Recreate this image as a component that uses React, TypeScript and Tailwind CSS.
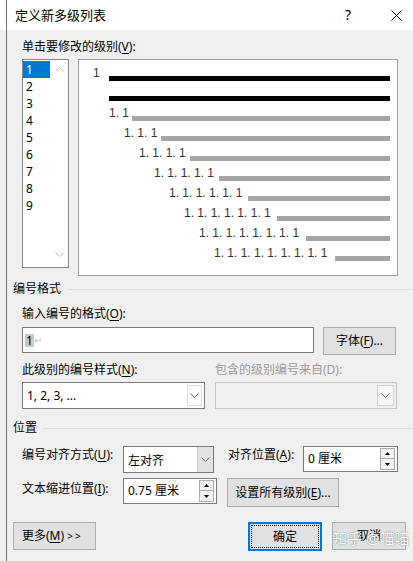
import React from "react";

const levels = ["1", "2", "3", "4", "5", "6", "7", "8", "9"];

// sub-level preview rows: 1. 1 ... 1. 1. 1. 1. 1. 1. 1. 1. 1
const subRows = [1, 2, 3, 4, 5, 6, 7, 8].map((k) => ({
  label: Array.from({ length: k + 1 }, () => "1").join(". "),
  indent: 30 + 15 * (k - 1),
  width: 23 + 14 * (k - 1),
}));

function U({ children }: { children: React.ReactNode }) {
  return <span className="underline underline-offset-[2px]">{children}</span>;
}

function Chevron({ color = "#606060" }: { color?: string }) {
  return (
    <svg width="9" height="5" viewBox="0 0 9 5">
      <polyline points="0.5,0.5 4.5,4.5 8.5,0.5" fill="none" stroke={color} strokeWidth="1" />
    </svg>
  );
}

function SpinBox({ value, width }: { value: string; width: string }) {
  return (
    <div className={`${width} h-[26px] border border-[#7a7a7a] bg-white flex items-center`}>
      <span className="flex-1 pl-[4px] leading-[16px]">{value}</span>
      <div className="mr-[2px] flex flex-col">
        <div className="w-[15px] h-[11px] border border-[#acacac] bg-[#f0f0f0] flex items-center justify-center">
          <svg width="5" height="3" viewBox="0 0 5 3">
            <polygon points="0,3 2.5,0 5,3" fill="#000" />
          </svg>
        </div>
        <div className="w-[15px] h-[11px] border border-t-0 border-[#acacac] bg-[#f0f0f0] flex items-center justify-center">
          <svg width="5" height="3" viewBox="0 0 5 3">
            <polygon points="0,0 2.5,3 5,0" fill="#000" />
          </svg>
        </div>
      </div>
    </div>
  );
}

export default function App() {
  return (
    <div className="w-[413px] h-[561px] relative overflow-hidden bg-[#f0f0f0] flex text-[12px] text-black font-['Noto_Sans','Noto_Sans_CJK_SC',sans-serif]">
      {/* window edge */}
      <div className="w-[6px] flex flex-col">
        <div className="h-[30px] bg-white" />
        <div className="flex-1 bg-[#f0f0f0]" />
      </div>
      <div className="w-px bg-[#6f6f6f]" />

      <div className="flex-1 flex flex-col">
        {/* Title bar */}
        <div className="h-[30px] bg-white flex items-center">
          <span className="pl-[8px] text-[13px] leading-[16px]">定义新多级列表</span>
          <span className="ml-auto text-[14px] leading-[16px] mr-[40px]">?</span>
          <svg width="11" height="11" viewBox="0 0 11 11" className="mr-[11px]">
            <line x1="0.5" y1="0.5" x2="10.5" y2="10.5" stroke="#000" strokeWidth="1" />
            <line x1="10.5" y1="0.5" x2="0.5" y2="10.5" stroke="#000" strokeWidth="1" />
          </svg>
        </div>

        {/* Level selection */}
        <div className="mt-[9px] pl-[15px] leading-[16px]">
          单击要修改的级别(<U>V</U>):
        </div>
        <div className="mt-[4px] flex items-start">
          <div className="ml-[15px] w-[47px] h-[209px] border border-[#828790] bg-white flex">
            <div className="w-[27px] pt-[1px]">
              {levels.map((n, i) => (
                <div
                  key={n}
                  className={
                    i === 0
                      ? "h-[17px] pl-[3px] leading-[17px] bg-[#0078d7] text-white"
                      : "h-[17px] pl-[3px] leading-[17px]"
                  }
                >
                  {n}
                </div>
              ))}
            </div>
            <div className="flex-1 flex flex-col items-center justify-between pt-[7px] pb-[10px]">
              <div className="rotate-180">
                <Chevron color="#c2c2c2" />
              </div>
              <Chevron color="#c2c2c2" />
            </div>
          </div>

          {/* Preview */}
          <div className="ml-[9px] w-[320px] h-[217px] border border-[#a0a0a0] bg-white pt-[4px] font-['Liberation_Sans',sans-serif] text-[12px] text-[#333]">
            <div className="h-[20px] flex">
              <span className="ml-[14px] w-[16px] leading-[18px]">1</span>
              <div className="mt-[12px] mr-[7px] h-[5px] flex-1 bg-black" />
            </div>
            <div className="h-[20px] flex">
              <div className="ml-[30px] mt-[12px] mr-[7px] h-[5px] flex-1 bg-black" />
            </div>
            {subRows.map((r) => (
              <div key={r.label} className="h-[20px] flex">
                <span
                  className="leading-[18px] whitespace-nowrap"
                  style={{ marginLeft: r.indent, width: r.width }}
                >
                  {r.label}
                </span>
                <div className="mt-[12px] mr-[7px] h-[5px] flex-1 bg-[#a6a6a6]" />
              </div>
            ))}
          </div>
        </div>

        {/* 编号格式 */}
        <div className="mt-[5px] flex items-center pl-[6px] pr-[2px]">
          <span className="leading-[16px]">编号格式</span>
          <div className="ml-[7px] flex-1 h-px bg-[#dcdcdc]" />
        </div>
        <div className="mt-[9px] pl-[15px] leading-[16px]">
          输入编号的格式(<U>O</U>):
        </div>
        <div className="mt-[5px] pl-[15px] flex items-start">
          <div className="w-[292px] h-[26px] border border-[#7a7a7a] bg-white flex items-center pl-[2px]">
            <span className="bg-[#c8c8c8] leading-[13px] px-px">1</span>
            <span className="text-[#c0c0c0] text-[10px] leading-[12px]">↵</span>
          </div>
          <button className="ml-[9px] w-[73px] h-[28px] border border-[#adadad] bg-[#e1e1e1] leading-[16px]">
            字体(<U>F</U>)...
          </button>
        </div>

        <div className="mt-[7px] pl-[15px] flex leading-[16px]">
          <span className="w-[193px]">
            此级别的编号样式(<U>N</U>):
          </span>
          <span className="text-[#9a9a9a]">包含的级别编号来自(D):</span>
        </div>
        <div className="mt-[4px] pl-[15px] flex">
          <div className="w-[183px] h-[27px] border border-[#7a7a7a] bg-white flex">
            <span className="flex-1 pl-[4px] leading-[25px]">1, 2, 3, ...</span>
            <div className="w-[15px] my-[2px] mr-[2px] border border-[#dcdcdc] flex items-center justify-center">
              <Chevron color="#707070" />
            </div>
          </div>
          <div className="ml-[10px] w-[182px] h-[27px] border border-[#c4c4c4] bg-[#f0f0f0] flex">
            <span className="flex-1" />
            <div className="w-[17px] my-[2px] mr-[2px] border border-[#d2d2d2] bg-[#f7f7f7] flex items-center justify-center">
              <Chevron color="#707070" />
            </div>
          </div>
        </div>

        {/* 位置 */}
        <div className="mt-[11px] flex items-center pl-[6px] pr-[1px]">
          <span className="leading-[16px]">位置</span>
          <div className="ml-[6px] flex-1 h-px bg-[#dcdcdc]" />
        </div>
        <div className="mt-[10px] pl-[15px] flex items-start">
          <span className="w-[101px] leading-[16px] mt-[1px]">
            编号对齐方式(<U>U</U>):
          </span>
          <div className="w-[91px] h-[27px] border border-[#7a7a7a] bg-white flex">
            <span className="flex-1 pl-[4px] pt-[5px] leading-[18px]">左对齐</span>
            <div className="w-[16px] bg-[#e3e3e3] border-l border-[#c8c8c8] flex items-center justify-center">
              <Chevron color="#606060" />
            </div>
          </div>
          <span className="ml-[14px] w-[75px] leading-[16px] mt-[1px]">
            对齐位置(<U>A</U>):
          </span>
          <SpinBox value="0 厘米" width="w-[95px]" />
        </div>
        <div className="mt-[5px] pl-[15px] flex items-start">
          <span className="w-[101px] leading-[16px] mt-[3px]">
            文本缩进位置(<U>I</U>):
          </span>
          <SpinBox value="0.75 厘米" width="w-[94px]" />
          <button className="ml-[10px] w-[112px] h-[29px] border border-[#adadad] bg-[#e1e1e1] leading-[16px]">
            设置所有级别(<U>E</U>)...
          </button>
        </div>

        {/* Bottom buttons */}
        <div className="mt-[15px] pl-[6px] flex">
          <button className="w-[83px] h-[28px] border border-[#adadad] bg-[#e1e1e1] text-left pl-[8px] leading-[16px]">
            更多(<U>M</U>) <span className="text-[10px] tracking-[2px]">&gt;&gt;</span>
          </button>
          <button className="ml-[152px] w-[74px] h-[29px] border-2 border-[#0078d7] bg-[#e1e1e1] p-[1px]">
            <div className="w-full h-full border border-dotted border-black flex items-center justify-center leading-[16px]">
              确定
            </div>
          </button>
          <button className="ml-[10px] w-[74px] h-[28px] border border-[#adadad] bg-[#e1e1e1] leading-[16px]">
            取消
          </button>
        </div>
      </div>

      {/* watermark */}
      <div className="absolute left-[332px] top-[529px] text-[15px] leading-[18px] text-white [text-shadow:0_0_1px_#8a8a8a,0_0_1px_#8a8a8a] whitespace-nowrap">
        知乎 @喵喵
      </div>
    </div>
  );
}
